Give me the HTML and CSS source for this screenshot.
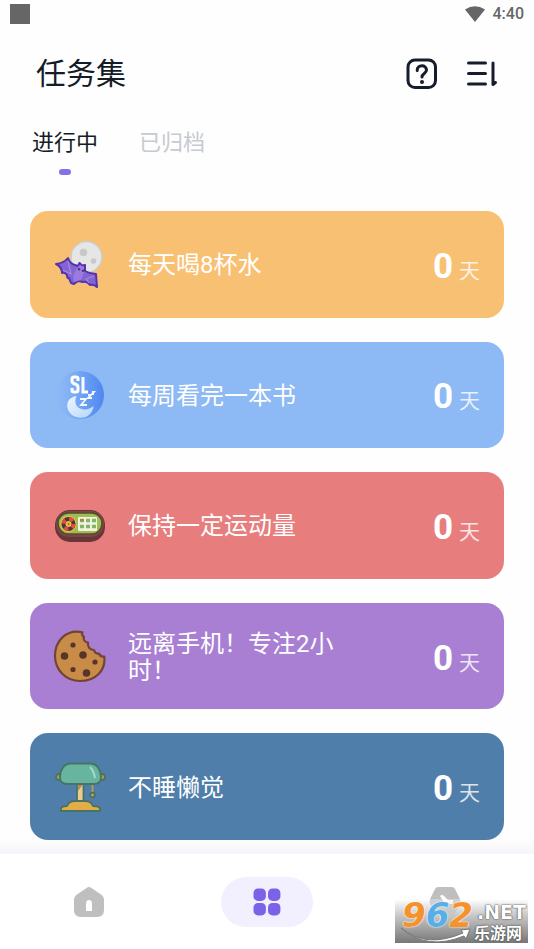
FILE: index.html
```html
<!DOCTYPE html>
<html lang="zh-CN">
<head>
<meta charset="utf-8">
<meta name="viewport" content="width=device-width, initial-scale=1">
<title>任务集</title>
<link rel="stylesheet" href="styles.css">
</head>
<body>
<div class="app">
  <div class="status">
    <span class="status-app"></span>
    <svg class="wifi" viewBox="0 0 20 16" aria-hidden="true"><path d="M0 3.600Q10-3.200 20 3.600L10 16Z"/></svg>
    <span class="clock">4:40</span>
  </div>
  <header class="header">
    <h1 class="title">任务集</h1>
    <button class="icon-btn" type="button" aria-label="帮助">
      <svg viewBox="0 0 32 32" aria-hidden="true"><rect x="2" y="2" width="27.500" height="27.500" rx="7"/><path d="M11.200 12.500C11.200 6.200 20.500 6.300 20.500 12C20.500 15.600 16 15.300 16 19"/><circle class="dot" cx="16" cy="24" r="2"/></svg>
    </button>
    <button class="icon-btn" type="button" aria-label="排序">
      <svg viewBox="0 0 32 32" aria-hidden="true"><path d="M2.500 5H19.500M2.500 15.500H19.500M2.500 26H19.500M27 5V26.500L29.500 24.500"/></svg>
    </button>
  </header>
  <nav class="tabs" aria-label="任务状态">
    <a class="tab tab-active" href="#active">进行中</a>
    <a class="tab" href="#archived">已归档</a>
  </nav>
  <main class="list">
    <article class="card orange">
      <svg class="art" viewBox="0 0 54 54" aria-hidden="true">
        <circle cx="33.500" cy="20" r="15.500" fill="#e6e6e6" stroke="#cfcbc5" stroke-width="1.500"/>
        <circle cx="30.500" cy="15.500" r="3.800" fill="#c8c8ca"/><circle cx="40.500" cy="24" r="2.800" fill="#c8c8ca"/>
        <path d="M3 27Q11 26 15 21Q17 27 22 28L25 29L26.500 26L29 28.500L32 28L32 34Q37 37 43 37L44 50Q41 47 37 48Q34 44 30 45L25 44L21 47L18 46L16 41Q14 42 14 38Q12 35 9 36Q9 30 3 27Z" fill="#8463d2" stroke="#5632ae" stroke-width="2" stroke-linejoin="round"/>
        <path d="M24 31L27 28L31 30L31 35L28 43L21 45L20 39Z" fill="#9b7ae1"/>
        <path d="M15 24L18 37L10 33M41 39L33 42L36 46" fill="none" stroke="#a18ade" stroke-width="1.200"/>
        <path d="M25 31.500L27 33M29 34L31 33.500" stroke="#473568" stroke-width="2"/>
      </svg>
      <h2 class="name">每天喝8杯水</h2><p class="days"><strong class="num">0</strong><span class="unit">天</span></p>
    </article>
    <article class="card blue">
      <svg class="art" viewBox="0 0 54 54" aria-hidden="true">
        <defs><linearGradient id="orb"><stop offset="0" stop-color="#83b3f7" stop-opacity="0"/><stop offset=".4" stop-color="#79aaf7"/><stop offset="1" stop-color="#4f87ef"/></linearGradient><linearGradient id="moon" x2="1" y2="1"><stop stop-color="#eff7ff"/><stop offset="1" stop-color="#b3d6fc"/></linearGradient></defs>
        <circle cx="27" cy="27" r="24" fill="url(#orb)"/>
        <path d="M23.500 28C10 30 12 47 25 49.500C33 51 40 46 40.500 38C33 45 18 41 23.500 28Z" fill="url(#moon)"/>
        <path d="M25 13V10.500Q25 9 23 9H21Q19 9 19 11V13Q19 15 22 16Q25 17 25 19V22Q25 24 23 24H21Q19 24 19 22V20M30 9V24H35" fill="none" stroke="#fff" stroke-width="3"/>
        <path d="M27 31H33L28 37H34M35 27H38L35 30H39M39 24H41L39 26H41" fill="none" stroke="#f3f8ff" stroke-width="1.800"/>
      </svg>
      <h2 class="name">每周看完一本书</h2><p class="days"><strong class="num">0</strong><span class="unit">天</span></p>
    </article>
    <article class="card red">
      <svg class="art" viewBox="0 0 54 54" aria-hidden="true">
        <rect x="2" y="12" width="50" height="32" rx="15" fill="#66363a"/>
        <rect x="3" y="13" width="48" height="26" rx="13" fill="#7d4641"/>
        <rect x="5" y="15" width="44" height="21" rx="10.500" fill="#9dbe50" stroke="#5a4933" stroke-width="1.500"/>
        <circle cx="15.500" cy="26" r="8" fill="#f1bd4b"/>
        <circle cx="15.500" cy="26" r="5" fill="none" stroke="#4d3633" stroke-width="4"/>
        <circle cx="15.500" cy="26" r="5" fill="none" stroke="#dc5143" stroke-width="4" stroke-dasharray="4 3.850"/>
        <circle cx="15.500" cy="26" r="2.200" fill="#e9bb45"/><circle cx="15.500" cy="26" r=".8" fill="#50402b"/>
        <rect x="25" y="19" width="19" height="14" rx="1" fill="#f3f1df"/>
        <path d="M27 22.500H31M33 22.500H37M39 22.500H43M27 28.500H31M33 28.500H37M39 28.500H43" stroke="#80b767" stroke-width="3.500"/>
        <path d="M27 22H31" stroke="#b97b58" stroke-width="2"/>
      </svg>
      <h2 class="name">保持一定运动量</h2><p class="days"><strong class="num">0</strong><span class="unit">天</span></p>
    </article>
    <article class="card purple">
      <svg class="art" viewBox="0 0 54 54" aria-hidden="true">
        <path d="M29.500 3.300C14-.2 2 11 2 27C2 41 13 52 27 52C42 52 53 42 51.300 27.500C49 28 47 27 46 24.500C44 25 42 24.500 41 21C37 21 34.500 18 35 13.500C31.500 13 30 10.500 31 8C29 6.500 28.500 5 29.500 3.300Z" fill="#c98b48" stroke="#704536" stroke-width="2.200" stroke-linejoin="round"/>
        <g fill="#573629"><circle cx="20" cy="16" r="2.600"/><circle cx="11.500" cy="27" r="3.800"/><circle cx="30" cy="26" r="3.800"/><circle cx="42" cy="33" r="2.600"/><circle cx="20" cy="40.500" r="2.600"/><circle cx="33.500" cy="44" r="3.800"/></g>
      </svg>
      <h2 class="name">远离手机！专注2小时！</h2><p class="days"><strong class="num">0</strong><span class="unit">天</span></p>
    </article>
    <article class="card navy">
      <svg class="art" viewBox="0 0 54 54" aria-hidden="true">
        <g stroke="#477464" stroke-width="1.800" stroke-linejoin="round">
          <path d="M39.500 23V33" stroke="#b9a14f"/><circle cx="39.500" cy="35" r="2.400" fill="#c99f45"/>
          <rect x="24" y="22" width="6.500" height="22" fill="#edca91"/>
          <path d="M8 51V49Q8 46 14 46Q16 41 22 41H32Q38 41 40 46Q47 46 47 49V51Z" fill="#e4ad4a"/>
          <path d="M8 14H6Q3 14 3 17Q3 20 6 20H8M47 14H49Q52 14 52 17Q52 20 49 20H47" fill="#b39c50"/>
          <path d="M18 3.500H37C44 3.500 48 10 48 17Q48 24 41 24H14Q7 24 7 17C7 10 11 3.500 18 3.500Z" fill="#67b59e"/>
        </g>
        <path d="M37 7Q41 11 42 18" fill="none" stroke="#a9d9c8" stroke-width="2"/><path d="M25 25H29.500L25 31Z" fill="#b68a62"/>
      </svg>
      <h2 class="name">不睡懒觉</h2><p class="days"><strong class="num">0</strong><span class="unit">天</span></p>
    </article>
  </main>
  <nav class="bottom" aria-label="主导航">
    <a class="nav-item" href="#home" aria-label="首页"><svg viewBox="0 0 32 32" aria-hidden="true"><path fill-rule="evenodd" d="M13.500 2Q16 .2 18.500 2L28 8.500Q31 10.500 31 14V24Q31 31 24 31H8Q1 31 1 24V14Q1 10.500 4 8.500ZM13 25H19V18Q19 14 16 14Q13 14 13 18Z"/></svg></a>
    <a class="nav-item nav-active" href="#tasks" aria-label="任务集" aria-current="page"><svg viewBox="0 0 32 32" aria-hidden="true"><rect x="2.500" y="2.500" width="12.400" height="12.400" rx="4.500"/><rect x="17" y="2.500" width="12.400" height="12.400" rx="4.500"/><rect x="2.500" y="17" width="12.400" height="12.400" rx="4.500"/><rect x="17" y="17" width="12.400" height="12.400" rx="4.500"/></svg></a>
    <a class="nav-item" href="#explore" aria-label="发现"><svg viewBox="0 0 32 32" aria-hidden="true"><path d="M9 1H23Q25 1 26 3L31 13Q32 15 31 18L25 29Q24 31 22 31H10Q8 31 7 29L1 18Q0 15 1 13L6 3Q7 1 9 1Z"/><path class="cut" d="M11 10Q13 8 15 10L19 14H24V18H19L15 16Z"/></svg></a>
  </nav>
  <div class="mark">
    <svg class="swoosh" viewBox="0 0 133 44" aria-hidden="true"><path d="M6 29Q31 50 68 34L66 31L75 30L71 40L69 37Q32 52 6 29Z"/></svg>
    <span class="mark-num">9<span class="mark-six">6</span>2</span>
    <span class="mark-side"><span class="mark-net">.NET</span><span class="mark-cn">乐游网</span></span>
  </div>
</div>
</body>
</html>
```
FILE: styles.css
```css
* { box-sizing: border-box; }
body {
  margin: 0;
  background: #fefefe;
  color: #151c27;
  font-family: Roboto, "Noto Sans CJK SC", sans-serif;
}
h1, h2, p { margin: 0; font-weight: 400; }
a { color: inherit; text-decoration: none; }
svg { display: block; }

.app { position: relative; display: flex; flex-direction: column; min-height: 100vh; }

.status { display: flex; align-items: center; height: 28px; padding: 0 10px; color: #666; }
.status-app { width: 20px; height: 20px; margin-right: auto; background: #666; }
.wifi { width: 20px; height: 16px; margin-right: 8px; fill: #666; }
.clock { font-size: 16px; font-weight: 500; line-height: 28px; }

.header { display: flex; align-items: center; gap: 28px; height: 88px; padding: 3px 36px 0; }
.title { margin-right: auto; font-size: 30px; line-height: 44px; }
.icon-btn { width: 32px; height: 32px; padding: 0; border: 0; background: none; }
.icon-btn svg { width: 32px; height: 32px; fill: none; stroke: #151c2c; stroke-width: 3; stroke-linecap: round; stroke-linejoin: round; }
.icon-btn .dot { fill: #151c2c; stroke: none; }

.tabs { display: flex; gap: 41px; padding: 10px 32px 0; }
.tab { display: flex; flex-direction: column; align-items: center; gap: 10px; height: 61px; color: #c6cad1; font-size: 22px; line-height: 33px; }
.tab-active { color: #151c27; }
.tab-active::after { width: 12px; height: 6px; border-radius: 3px; background: #8870e4; content: ""; }

.list { display: grid; flex: 1; grid-auto-rows: 1fr; gap: 24px; padding: 24px 30px 14px; background: linear-gradient(to top, #f5f5f9, #fefefe 16px); }
.card { display: flex; align-items: center; min-height: 106px; padding: 0 24px 0 23px; border-radius: 18px; color: #fff; }
.orange { background: #f8c072; }
.blue { background: #8db9f5; }
.red { background: #e87d7e; }
.purple { background: #a97fd3; }
.navy { background: #507eaa; }
.art { flex: none; width: 54px; height: 54px; margin-right: 21px; }
.name { max-width: 212px; padding-top: 3px; font-size: 24px; line-height: 27px; }
.days { display: flex; align-items: baseline; gap: 6px; margin-left: auto; padding-top: 5px; }
.num { font-size: 35px; font-weight: 700; line-height: 42px; }
.unit { font-size: 21px; line-height: 30px; opacity: 0.8; }

.bottom { display: flex; align-items: center; justify-content: space-around; height: 95px; background: #fff; }
.nav-item { display: flex; align-items: center; justify-content: center; width: 92px; height: 50px; border-radius: 25px; fill: #bfbfbf; }
.nav-item svg { width: 32px; height: 32px; }
.nav-active { background: #f2efff; fill: #7c62e8; }
.cut { fill: #fff; }

.mark { position: absolute; right: 6px; bottom: 6px; display: flex; justify-content: space-between; width: 133px; height: 44px; padding: 0 2px 0 7px; background: linear-gradient(rgba(255, 255, 255, 0.3), #c4c4c4 40%, #777); color: #fff; }
.swoosh { position: absolute; inset: 0; fill: #fff; stroke: #777; stroke-width: 1; }
.mark-num { position: relative; color: #f6922b; font: italic bold 34px/32px "DejaVu Sans", sans-serif; text-shadow: 0 0 2px #fff, 0 0 1px #fff; }
.mark-six { color: #58aee6; }
.mark-side { position: relative; display: flex; flex-direction: column; align-items: flex-end; text-shadow: 0 0 2px #444, 0 0 1px #444; }
.mark-net { font: bold 19px/27px "DejaVu Sans", sans-serif; }
.mark-cn { padding-right: 4px; font-size: 16px; font-weight: 700; line-height: 16px; }
```
